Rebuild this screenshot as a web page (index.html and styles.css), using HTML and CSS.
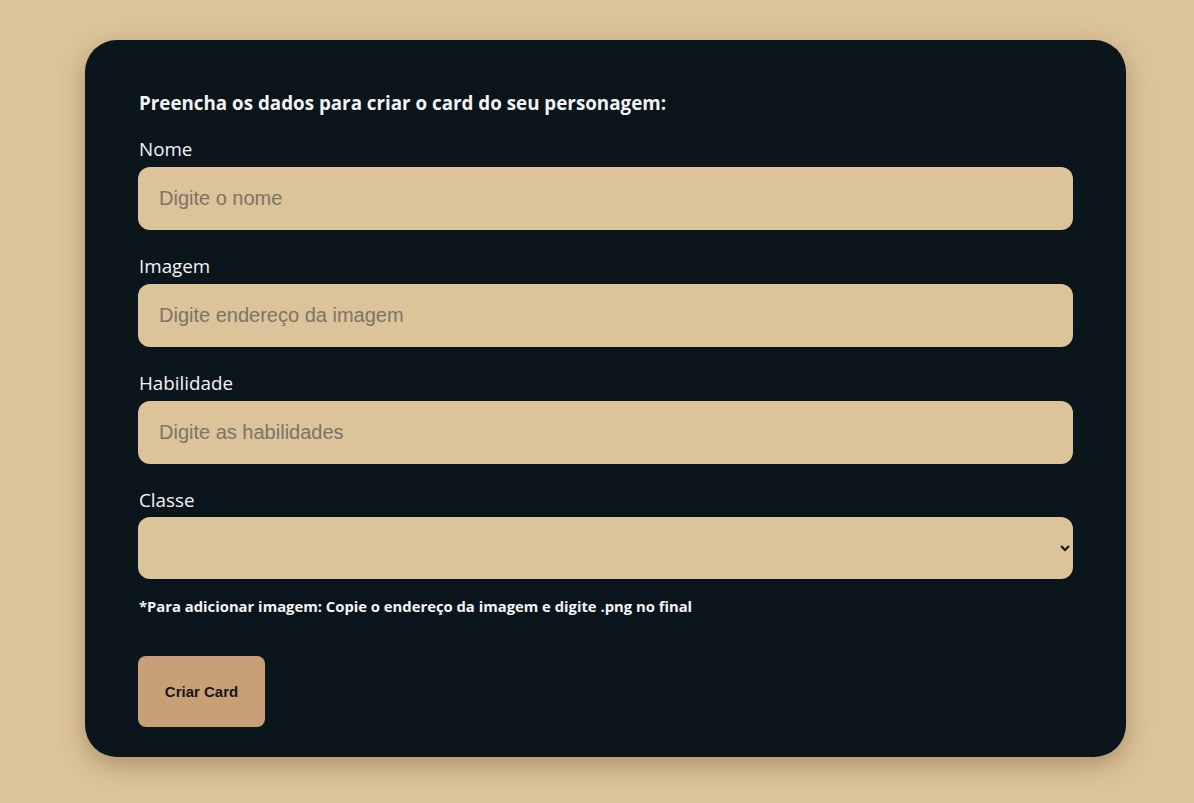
FILE: index.html
```html
<!DOCTYPE html>
<html lang="pt-BR">
<head>
<meta charset="utf-8">
<title>Criar Card</title>
<link rel="stylesheet" href="styles.css">
</head>
<body>
<main class="page">
  <form class="card">
    <h2 class="title">Preencha os dados para criar o card do seu personagem:</h2>
    <div class="field">
      <label class="label" for="nome">Nome</label>
      <input class="input" id="nome" type="text" placeholder="Digite o nome">
    </div>
    <div class="field">
      <label class="label" for="imagem">Imagem</label>
      <input class="input" id="imagem" type="text" placeholder="Digite endereço da imagem">
    </div>
    <div class="field">
      <label class="label" for="hab">Habilidade</label>
      <input class="input" id="hab" type="text" placeholder="Digite as habilidades">
    </div>
    <div class="field field-last">
      <label class="label" for="classe">Classe</label>
      <select class="input select" id="classe"><option></option></select>
    </div>
    <p class="note">*Para adicionar imagem: Copie o endereço da imagem e digite .png no final</p>
    <button class="btn" type="button">Criar Card</button>
  </form>
</main>
</body>
</html>
```
FILE: styles.css
```css
* { box-sizing: border-box; }
html, body { margin: 0; padding: 0; }
body {
  background: #ddc399;
  font-family: "Open Sans", "Noto Sans", sans-serif;
  height: 803px;
  overflow: hidden;
}
.page {
  padding: 40px 68px 0 85px;
}
.card {
  width: 1041px;
  height: 717px;
  background: #0b151c;
  border-radius: 32px;
  box-shadow: 0 8px 24px rgba(80, 55, 20, 0.35);
  padding: 49px 53px 30px 53px;
  display: flex;
  flex-direction: column;
  align-items: stretch;
}
.title {
  margin: 0 0 20px 1px;
  color: #f4f4f4;
  font-size: 18.8px;
  font-weight: 700;
  line-height: 28px;
  flex-shrink: 0;
}
.field {
  display: flex;
  flex-direction: column;
  margin-bottom: 24px;
  flex-shrink: 0;
}
.field-last .label {
  margin-bottom: 5px;
}
.label {
  color: #f4f4f4;
  font-size: 18.8px;
  line-height: 24px;
  margin: 0 0 6px 1px;
}
.input {
  height: 63px;
  border: none;
  border-radius: 12px;
  background: #ddc399;
  padding: 0 21px;
  font-family: "Liberation Sans", Arial, sans-serif;
  font-size: 20px;
  color: #222;
  outline: none;
  flex-shrink: 0;
}
.input::placeholder { color: #7a746a; }
.select {
  height: 62px;
  padding-right: 4px;
  color: #111;
}
.note {
  margin: -7px 0 40px 1px;
  color: #f4f4f4;
  font-size: 14.8px;
  font-weight: 700;
  line-height: 20px;
  flex-shrink: 0;
}
.btn {
  align-self: flex-start;
  flex-shrink: 0;
  width: 127px;
  height: 71px;
  border: none;
  border-radius: 8px;
  background: #c8a077;
  color: #161616;
  font-family: "Liberation Sans", Arial, sans-serif;
  font-weight: 700;
  font-size: 15px;
  cursor: pointer;
}
```
